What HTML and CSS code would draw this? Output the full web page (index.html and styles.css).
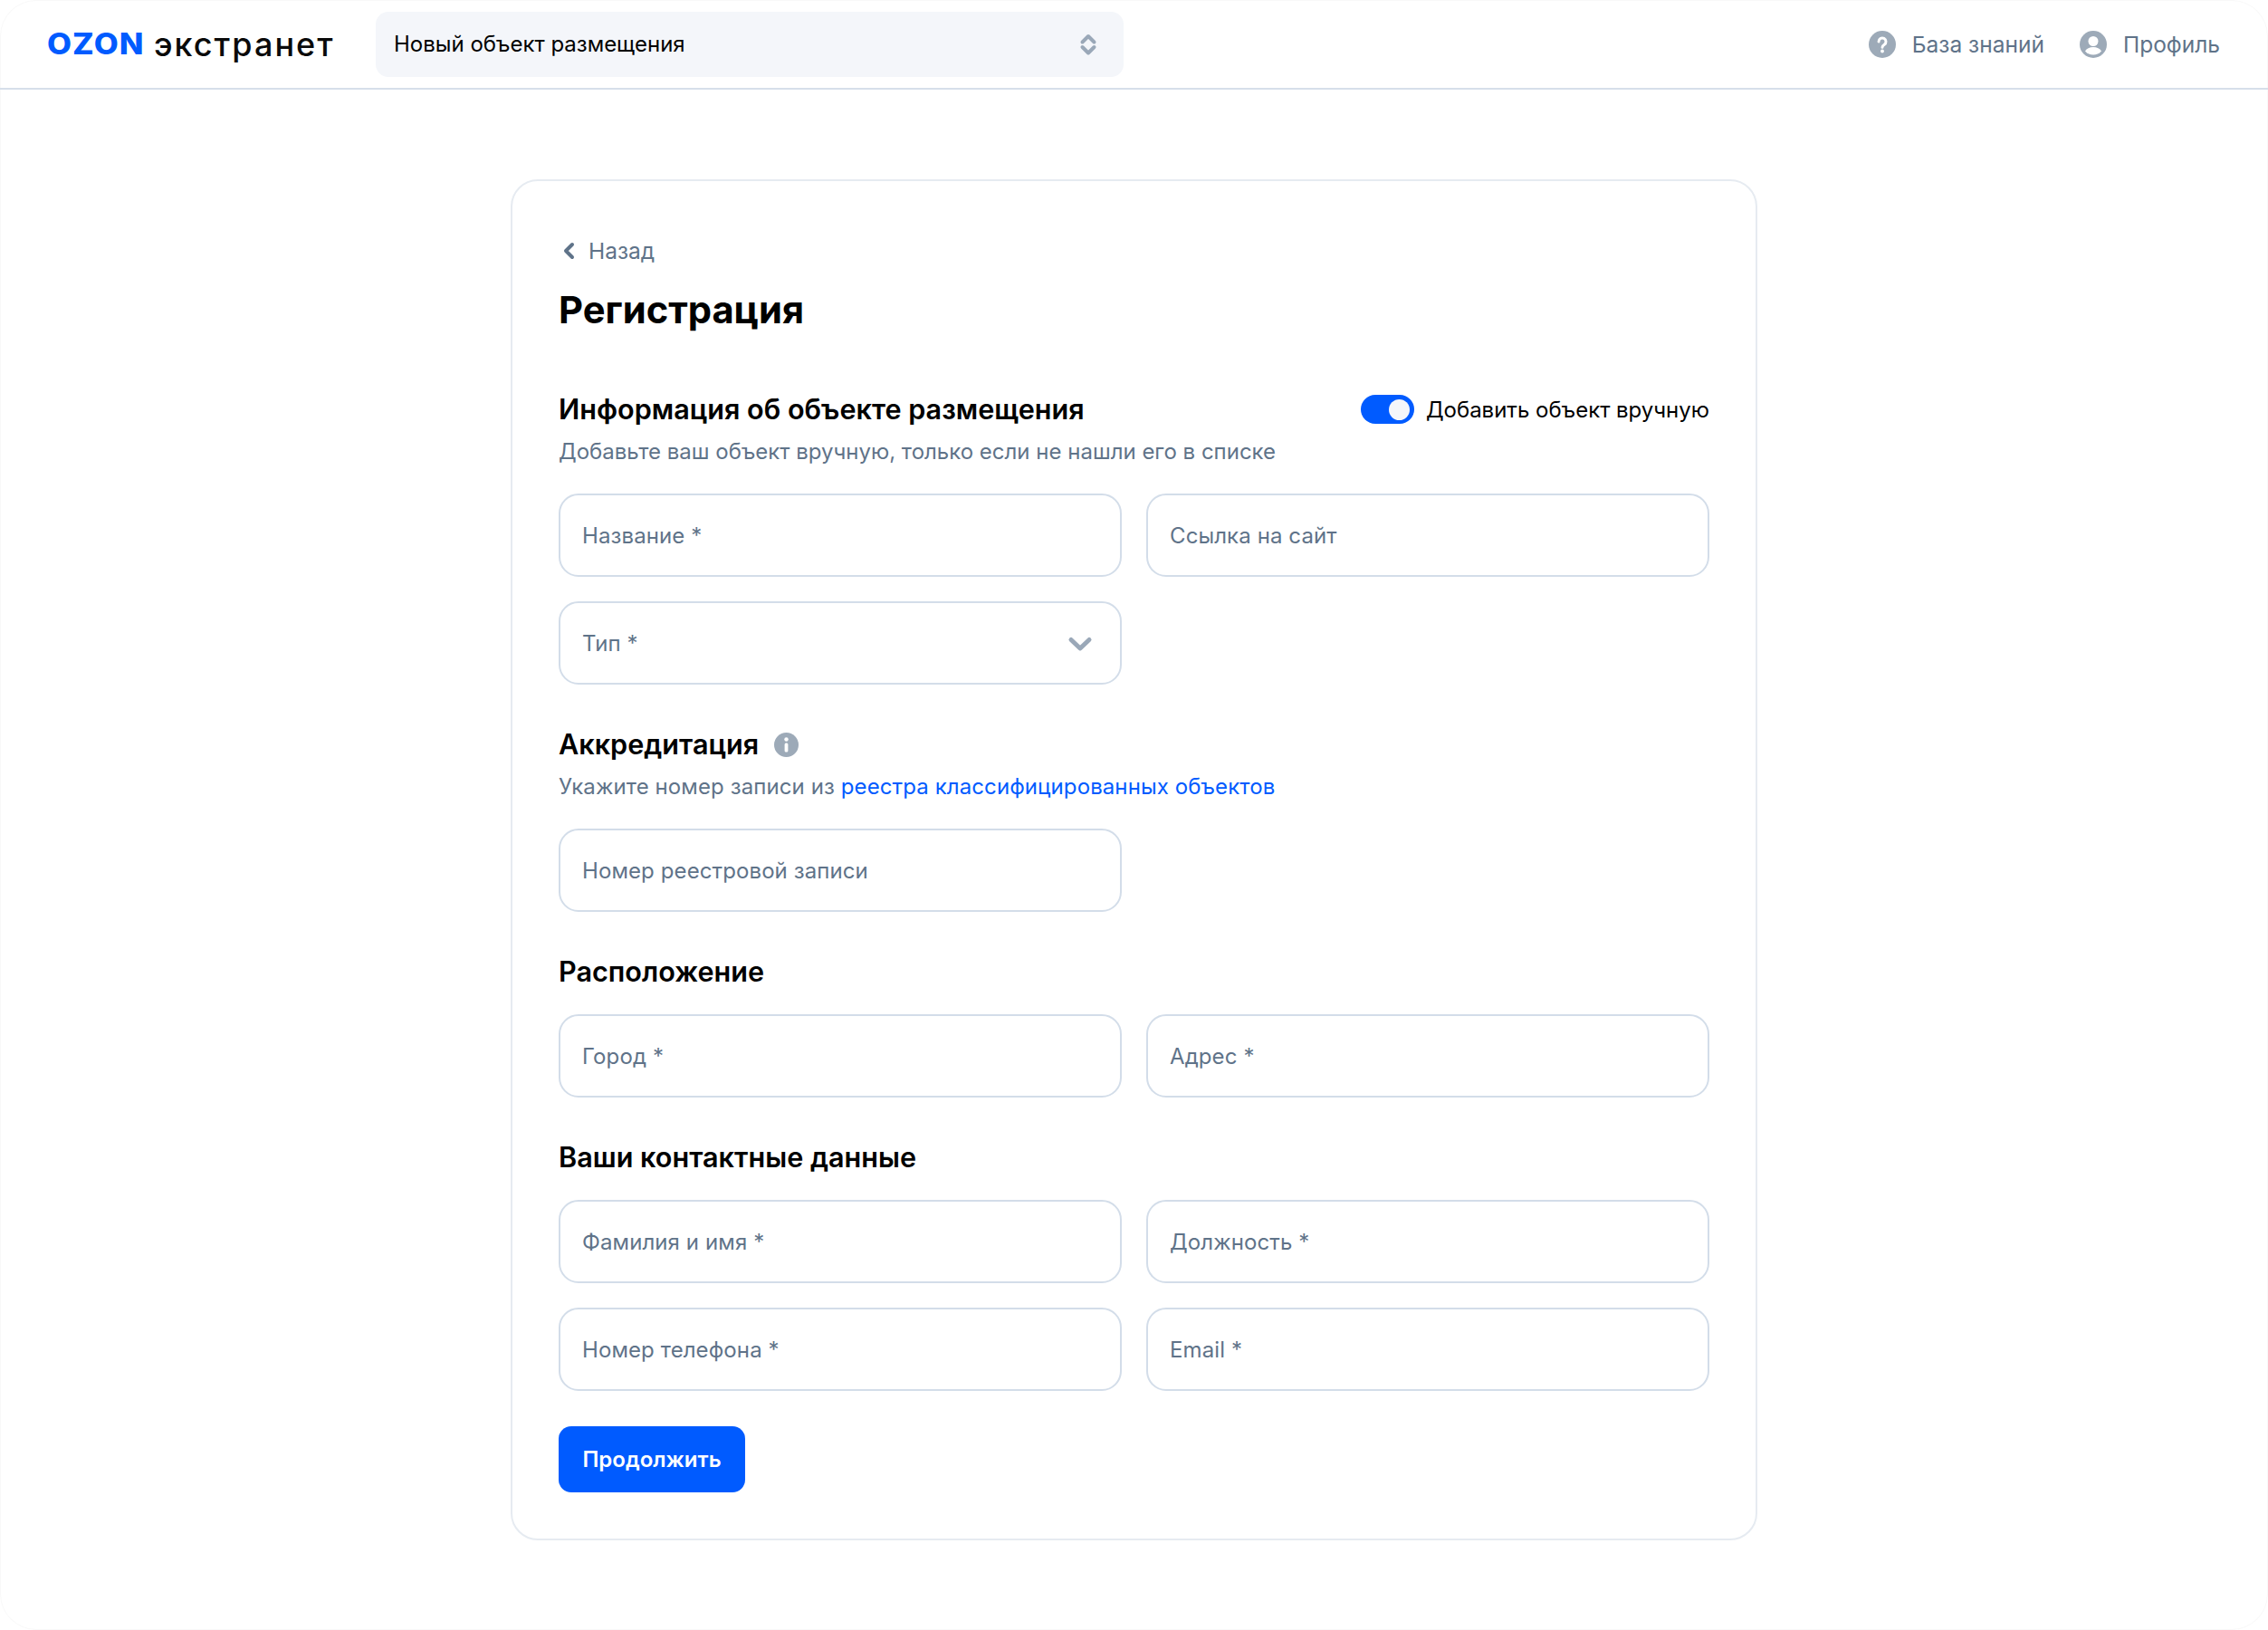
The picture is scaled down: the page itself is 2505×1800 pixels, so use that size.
FILE: index.html
```html
<!DOCTYPE html>
<html lang="ru">
<head>
    <meta charset="UTF-8">
    <meta name="viewport" content="width=device-width, initial-scale=1.0">
    <title>Ozon экстранет</title>
    <link rel="stylesheet" href="styles.css">
</head>
<body>

<div class="page">

<header class="topbar">
    <div class="logo"><span class="logo-ozon">OZON</span><span class="logo-name">экстранет</span></div>
    <div class="object-select">
        <span>Новый объект размещения</span>
        <svg class="updown" width="20" height="26" viewBox="0 0 20 26" fill="none" stroke="#9aa8b8" stroke-width="4" stroke-linecap="round" stroke-linejoin="round"><path d="M3.500 10.500 10 4l6.500 6.500"/><path d="M3.500 16l6.500 6.500 6.500-6.500"/></svg>
    </div>
    <nav class="topnav">
        <a class="topnav-item">
            <svg width="30" height="30" viewBox="0 0 30 30"><circle cx="15" cy="15" r="15" fill="#9daab8"/><path d="M11 12a4 4 0 1 1 6.200 3.300c-1.500 1-2.200 1.600-2.200 3" fill="none" stroke="#fff" stroke-width="3" stroke-linecap="round"/><circle cx="15" cy="22.500" r="1.900" fill="#fff"/></svg>
            База знаний
        </a>
        <a class="topnav-item">
            <svg width="30" height="30" viewBox="0 0 30 30"><circle cx="15" cy="15" r="15" fill="#9daab8"/><circle cx="15" cy="11.500" r="5.500" fill="#fff"/><path d="M6 22.500c1.500-3 5-4.500 9-4.500s7.500 1.500 9 4.500a12 12 0 0 1-18 0z" fill="#fff"/></svg>
            Профиль
        </a>
    </nav>
</header>

<main class="card">
    <a class="back">
        <svg width="16" height="22" viewBox="0 0 16 22" fill="none" stroke="#5f7389" stroke-width="4" stroke-linecap="round" stroke-linejoin="round"><path d="M12 4 5 11l7 7"/></svg>
        Назад
    </a>
    <h1>Регистрация</h1>

    <section class="form-section first">
        <div class="section-head">
            <h2>Информация об объекте размещения</h2>
            <div class="switch-wrap">
                <span class="switch"><span class="switch-knob"></span></span>
                Добавить объект вручную
            </div>
        </div>
        <p class="hint">Добавьте ваш объект вручную, только если не нашли его в списке</p>
        <div class="fields">
            <div class="field">Название *</div>
            <div class="field">Ссылка на сайт</div>
            <div class="field field-select">
                Тип *
                <svg class="field-arrow" width="28" height="18" viewBox="0 0 28 18" fill="none" stroke="#9aa8b8" stroke-width="5" stroke-linecap="round" stroke-linejoin="round"><path d="M4 4.500 14 14 24 4.500"/></svg>
            </div>
        </div>
    </section>

    <section class="form-section">
        <h2 class="with-icon">Аккредитация
            <svg width="27" height="27" viewBox="0 0 27 27"><circle cx="13.500" cy="13.500" r="13.500" fill="#9daab8"/><circle cx="13.500" cy="7.500" r="2.200" fill="#fff"/><rect x="11.600" y="11.500" width="3.800" height="10" rx="1.500" fill="#fff"/></svg>
        </h2>
        <p class="hint hint-wide">Укажите номер записи из <a class="link">реестра классифицированных объектов</a></p>
        <div class="fields">
            <div class="field">Номер реестровой записи</div>
        </div>
    </section>

    <section class="form-section">
        <h2>Расположение</h2>
        <div class="fields no-hint">
            <div class="field">Город *</div>
            <div class="field">Адрес *</div>
        </div>
    </section>

    <section class="form-section">
        <h2>Ваши контактные данные</h2>
        <div class="fields no-hint">
            <div class="field">Фамилия и имя *</div>
            <div class="field">Должность *</div>
            <div class="field">Номер телефона *</div>
            <div class="field">Email *</div>
        </div>
    </section>

    <button class="button-primary">Продолжить</button>
</main>

</div>

</body>
</html>
```

FILE: styles.css
```css
body {
    margin: 0;
    background: #fff;
    font-family: Inter, "Liberation Sans", sans-serif;
    font-size: 24px;
    color: #000;
}

a {
    color: inherit;
}

.page {
    height: 1800px;
    border-radius: 40px;
    box-shadow: inset 0 0 0 1px #f9f9f9;
    overflow: hidden;
}

/* Top bar */
.topbar {
    display: flex;
    align-items: center;
    height: 97px;
    padding: 0 53px 0 52px;
    border-bottom: 2px solid #d6dfea;
}

.logo {
    display: flex;
    align-items: center;
    width: 363px;
}

.logo-ozon {
    width: 106px;
    margin-right: 12px;
    font-size: 32px;
    font-weight: 800;
    letter-spacing: 1px;
    color: #005bff;
    transform: scaleX(1.09);
    transform-origin: left center;
}

.logo-name {
    font-size: 36px;
    font-weight: 500;
    letter-spacing: 2px;
    color: #0a0a0a;
}

.object-select {
    display: flex;
    align-items: center;
    justify-content: space-between;
    box-sizing: border-box;
    width: 826px;
    height: 72px;
    padding: 0 29px 0 20px;
    background: #f4f6fa;
    border-radius: 14px;
}

.topnav {
    display: flex;
    gap: 39px;
    margin-left: auto;
    font-size: 24.500px;
    color: #5f7389;
}

.topnav-item {
    display: flex;
    align-items: center;
    gap: 18px;
}

/* Card */
.card {
    box-sizing: border-box;
    width: 1377px;
    height: 1503px;
    margin: 99px auto 0;
    padding: 60px 51px 0;
    border: 2px solid #e6ebf1;
    border-radius: 30px;
}

.back {
    display: flex;
    align-items: center;
    gap: 14px;
    height: 34px;
    padding-left: 3px;
    font-size: 24.500px;
    color: #5f7389;
}

h1 {
    margin: 20px 0 0;
    font-size: 41.700px;
    line-height: 56px;
    font-weight: 700;
}

h2 {
    margin: 0;
    font-size: 30.600px;
    line-height: 40px;
    font-weight: 600;
}

.form-section {
    margin-top: 46px;
}

.form-section.first {
    margin-top: 62px;
}

.section-head {
    display: flex;
    align-items: center;
    justify-content: space-between;
}

.with-icon {
    display: flex;
    align-items: center;
    gap: 17px;
}

.switch-wrap {
    display: flex;
    align-items: center;
    gap: 13px;
    font-size: 24px;
    font-weight: 400;
}

.switch {
    display: flex;
    align-items: center;
    justify-content: flex-end;
    box-sizing: border-box;
    width: 59px;
    height: 32px;
    padding-right: 5px;
    background: #005bff;
    border-radius: 16px;
}

.switch-knob {
    width: 23px;
    height: 23px;
    background: #f4f6fa;
    border-radius: 50%;
}

.hint {
    margin: 10px 0 0;
    line-height: 34px;
    color: #5f7389;
}

.hint-wide {
    letter-spacing: 0.100px;
}

.link {
    color: #005bff;
}

/* Form fields */
.fields {
    display: grid;
    grid-template-columns: 622px 622px;
    gap: 27px;
    margin-top: 29px;
}

.fields.no-hint {
    margin-top: 27px;
}

.field {
    display: flex;
    align-items: center;
    box-sizing: border-box;
    height: 92px;
    padding: 0 24px;
    border: 2px solid #d3dde9;
    border-radius: 22px;
    letter-spacing: 0.100px;
    color: #5f7389;
}

.field-select {
    justify-content: space-between;
    padding-right: 30px;
}

.field-arrow {
    margin-top: 2px;
}

.button-primary {
    display: block;
    width: 206px;
    height: 73px;
    margin-top: 39px;
    padding: 0;
    border: none;
    border-radius: 14px;
    background: #005bff;
    color: #fff;
    font-family: inherit;
    font-size: 24px;
    font-weight: 600;
}
```
